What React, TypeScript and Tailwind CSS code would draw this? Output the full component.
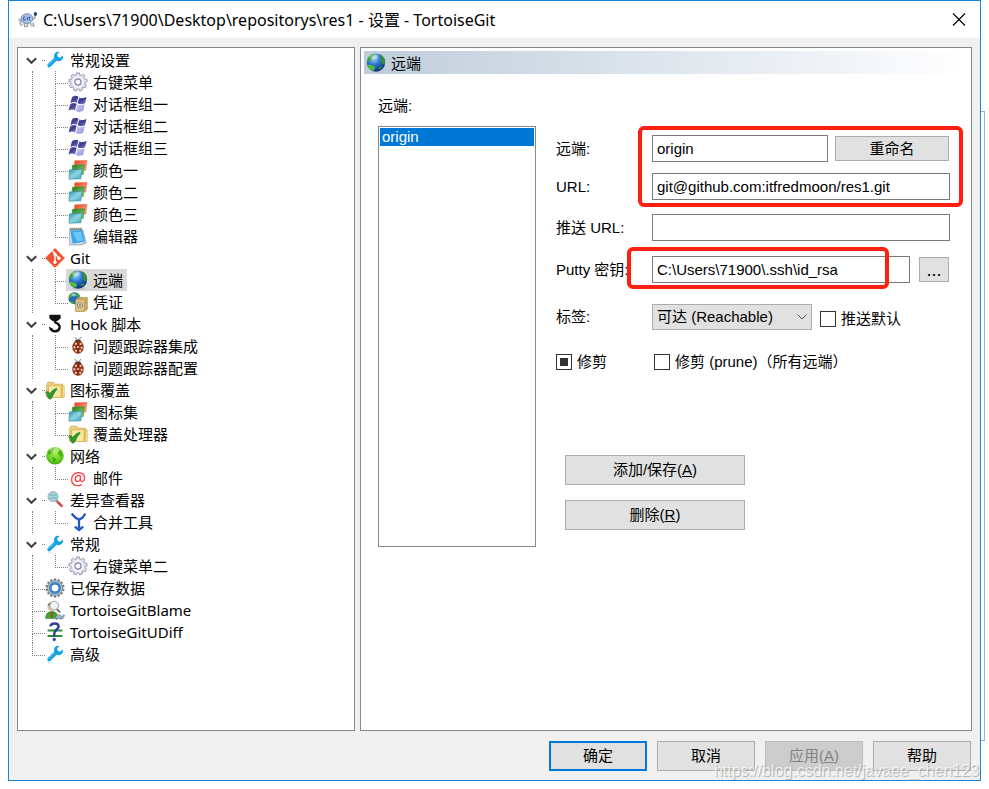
import { useEffect, useRef, useState } from "react"
import type { ReactNode } from "react"

const treeFont = "font-['Noto_Sans','Noto_Sans_CJK_SC',sans-serif]"
const formFont = "font-['Liberation_Sans','Noto_Sans_CJK_SC',sans-serif]"

// Outline of a cog with flat teeth, centred on 10,10
function cogPath(teeth: number, outer: number, inner: number) {
  const step = (Math.PI * 2) / teeth
  const points: string[] = []
  for (let i = 0; i < teeth; i++) {
    const corners = [
      [inner, -0.34],
      [outer, -0.22],
      [outer, 0.22],
      [inner, 0.34],
    ]
    for (const [r, offset] of corners) {
      const angle = (i + offset) * step
      points.push(`${(10 + r * Math.sin(angle)).toFixed(2)} ${(10 - r * Math.cos(angle)).toFixed(2)}`)
    }
  }
  return `M${points.join("L")}z`
}

const WrenchIcon = () => (
  <svg viewBox="0 0 20 20" className="w-5 h-5">
    <path d="M4.2 15.4 11.5 8.2" stroke="#12a2e8" strokeWidth="3.8" strokeLinecap="round" />
    <path d="M14.6 1.9a4.4 4.4 0 0 0-5.4 5.8l3.2 3.2a4.4 4.4 0 0 0 5.5-5.5l-2.9 2.3-2.3-.7-.6-2.4z" fill="#12a2e8" />
    <path d="M4 14.6 9.6 9" stroke="#5cc6f5" strokeWidth="1" strokeLinecap="round" />
    <path d="M3 18.8h4" stroke="#d6f0fb" strokeWidth="1.4" strokeLinecap="round" />
  </svg>
)

const GearIcon = () => (
  <svg viewBox="0 0 20 20" className="w-5 h-5">
    <path d={cogPath(9, 9.2, 7.2)} fill="#e0e0ec" stroke="#9292a6" strokeWidth="0.9" strokeLinejoin="round" />
    <circle cx="10" cy="10" r="5" fill="none" stroke="#f3f3f9" strokeWidth="1.8" />
    <circle cx="10" cy="10" r="3" fill="#fff" stroke="#9090a6" strokeWidth="1.3" />
  </svg>
)

const FlagIcon = () => (
  <svg viewBox="0 0 20 20" className="w-5 h-5">
    <defs>
      <linearGradient id="flag-dark" x1="0" y1="0" x2="0.7" y2="1">
        <stop offset="0" stopColor="#8f8fd0" />
        <stop offset="0.45" stopColor="#39398c" />
        <stop offset="1" stopColor="#7474c0" />
      </linearGradient>
      <linearGradient id="flag-light" x1="0" y1="0" x2="1" y2="1">
        <stop offset="0" stopColor="#c9c9f4" />
        <stop offset="1" stopColor="#9494d8" />
      </linearGradient>
    </defs>
    <path d="M4 3C6 1.4 8.2 1.4 10.4 2.6L8.9 9C6.7 7.8 4.6 7.8 2.4 9.2z" fill="url(#flag-dark)" />
    <path d="M11.2 3.2c2.6 1.3 4.9 1 7.4-.3L17 9.2c-2.6 1.3-4.8 1.4-7.3.1z" fill="url(#flag-dark)" />
    <path d="M2.1 10.2c2.2-1.4 4.3-1.4 6.5-.2L7 16.4c-2.2-1.2-4.4-1.1-6.4.3z" fill="url(#flag-dark)" />
    <path d="M9.5 10.4c2.5 1.3 4.8 1.2 7.3-.1l-1.6 6.5c-2.5 1.4-4.8 1.6-7.3.3z" fill="url(#flag-light)" />
  </svg>
)

const ColorsIcon = () => (
  <svg viewBox="0 0 20 20" className="w-5 h-5">
    <defs>
      <linearGradient id="red" x1="0" y1="0" x2="1" y2="1">
        <stop offset="0" stopColor="#ee3d18" />
        <stop offset="1" stopColor="#fbb8a0" />
      </linearGradient>
      <linearGradient id="green" x1="0" y1="0" x2="1" y2="1">
        <stop offset="0" stopColor="#23801a" />
        <stop offset="1" stopColor="#8fd070" />
      </linearGradient>
      <linearGradient id="cyan" x1="0" y1="0" x2="1" y2="1">
        <stop offset="0" stopColor="#2897b4" />
        <stop offset="0.5" stopColor="#8fd2e2" />
        <stop offset="1" stopColor="#38a3bd" />
      </linearGradient>
    </defs>
    <path d="M6.8.8 19 .4 17.8 10 6.2 10.2z" fill="url(#red)" stroke="#e05a3a" strokeWidth="0.5" />
    <path d="M4.4 5.2 16.4 4.7 15.4 14.4 4 14.6z" fill="url(#green)" stroke="#2f8a20" strokeWidth="0.5" />
    <path d="M1.4 9.9 14.2 9.1 12.8 18.8 1 19.2z" fill="url(#cyan)" stroke="#2b87a0" strokeWidth="0.6" />
  </svg>
)

const NotepadIcon = () => (
  <svg viewBox="0 0 20 20" className="w-5 h-5">
    <path d="M1.6 3.2h13L18.4 17 13 19H1.6z" fill="#c9d6e2" stroke="#8297ac" strokeWidth="0.6" />
    <path d="M2.4 4.6 14.4 4l2.6 11.8L4.6 17.6z" fill="#3da5e6" />
    <path d="M5 6.2 13 5.8 15 14.6 9 15.6z" fill="#6cc6f8" />
    <path d="M16.8 15.8 12.6 19l-.5-2.6z" fill="#edf4fa" stroke="#8297ac" strokeWidth="0.4" />
    <path d="M2.4 2.9h12" stroke="#5d5d54" strokeWidth="2.2" strokeDasharray="1 1" />
  </svg>
)

const GitIcon = () => (
  <svg viewBox="0 0 20 20" className="w-5 h-5">
    <path d="M10 .6 19.4 10 10 19.4.6 10z" fill="#f05133" stroke="#f05133" strokeWidth="1" strokeLinejoin="round" />
    <path d="M7.2 2.8 10 5.6V14M10 6l4 4" stroke="#fff" strokeWidth="1.4" fill="none" />
    <circle cx="10" cy="6.2" r="1.6" fill="#fff" />
    <circle cx="10" cy="14.2" r="1.7" fill="#fff" />
    <circle cx="14" cy="10.2" r="1.7" fill="#fff" />
  </svg>
)

const GlobeIcon = () => (
  <svg viewBox="0 0 20 20" className="w-5 h-5">
    <defs>
      <radialGradient id="globe" cx="0.38" cy="0.25" r="0.8">
        <stop offset="0" stopColor="#a9dcfb" />
        <stop offset="0.45" stopColor="#2d77d2" />
        <stop offset="1" stopColor="#0a2672" />
      </radialGradient>
    </defs>
    <ellipse cx="11" cy="18.4" rx="7" ry="1.4" fill="#c2c4c8" />
    <circle cx="10" cy="9.6" r="9.2" fill="url(#globe)" />
    <path d="M2.2 4.9C4.2 1.7 7 .8 8.8.8 8.2 2.6 6.4 3.8 5.4 5.8 4.4 7.6 3 8.6 1 9.2c0-1.6.4-3 1.2-4.3z" fill="#3ba82e" />
    <path d="M1.6 12.2c2.6-1 5 .4 7.6 2.2-.4 2-1.8 3.6-3.6 3-1.8-1-3.4-3.2-4-5.2z" fill="#4dbf34" />
    <path d="M13.6 1.2c2.2.8 3.8 2.4 4.8 4.6.9 2.4.7 4.4 0 6-1.8-.8-3.4-2.2-3.4-4.4-.2-2.2-.6-4.2-1.4-6.2z" fill="#34912c" />
    <path d="M13 14.2 16.6 13.6c-.8 1.4-2 2.4-3.4 3.2z" fill="#2f9b2d" />
    <ellipse cx="8" cy="3.8" rx="4" ry="2.2" fill="#fff" opacity="0.35" />
  </svg>
)

const CredentialIcon = () => (
  <svg viewBox="0 0 20 20" className="w-5 h-5">
    <circle cx="6.4" cy="6.2" r="6" fill="#2666bd" />
    <path d="M1 4C2.6 1 5 .2 6.8.2 6.6 2.4 4 5 .6 7zM1.4 9.4c2-1 4 0 5 2L4.6 12zM8.4.6c2.4.6 3.6 2.6 4 5l-3 .2z" fill="#3fae33" />
    <ellipse cx="6" cy="2.8" rx="2.6" ry="1.6" fill="#fff" opacity="0.5" />
    <path d="M7.6 7.6 11 5.4h8.4v12L16.6 19.4h-9z" fill="#c9a75c" stroke="#a08545" strokeWidth="0.5" />
    <path d="M8 8h8.2v11H8z" fill="#e2c98a" stroke="#b59a58" strokeWidth="0.5" />
    <circle cx="12" cy="13.2" r="2.7" fill="#d0ccbe" stroke="#8d8570" strokeWidth="0.9" />
    <circle cx="12" cy="13.2" r="0.9" fill="#7b7462" />
  </svg>
)

const HookIcon = () => (
  <svg viewBox="0 0 20 20" className="w-5 h-5">
    <path d="M4.4.8h11.2v3.6L12.4 7H7.6L4.4 4.4z" fill="#111" />
    <path d="M10 8.4c3.2 1.2 5 2.8 4.6 5.4-.5 2.6-2.6 3.6-5 3.4-1.8 0-3-.8-3.6-2.2" fill="none" stroke="#111" strokeWidth="2.4" />
    <path d="M4 12.4 8 15l-3.4 1z" fill="#111" />
    <circle cx="10" cy="7.8" r="1.3" fill="#111" />
  </svg>
)

const BugIcon = () => (
  <svg viewBox="0 0 20 20" className="w-5 h-5">
    <path d="M7 1.2 9 3.6M13 1.2 11 3.6" stroke="#555" strokeWidth="0.9" />
    <path d="M6.4 5.6C7 2.8 13 2.8 13.6 5.6z" fill="#2c2c34" />
    <ellipse cx="10" cy="11.2" rx="5.7" ry="6.6" fill="#96381a" />
    <path d="M10 5v12.6" stroke="#5d1c0a" strokeWidth="0.7" />
    <g fill="#f0cfc0">
      <circle cx="8" cy="7.8" r="1.1" />
      <circle cx="12.6" cy="8" r="1.1" />
      <circle cx="6.4" cy="11.4" r="1.1" />
      <circle cx="10" cy="11" r="1" />
      <circle cx="13.7" cy="11.8" r="1.1" />
      <circle cx="8" cy="14.8" r="1.1" />
      <circle cx="12.2" cy="14.8" r="1.1" />
    </g>
  </svg>
)

const FolderIcon = () => (
  <svg viewBox="0 0 20 20" className="w-5 h-5">
    <path d="M1.6 5.4 2.8 2.2h5.8l1.4 2h7.6v13H1.6z" fill="#ecd076" stroke="#bf9a42" strokeWidth="0.6" />
    <path d="M3.6 5.8h15.6v11.6H3.6z" fill="#fae9a6" stroke="#c9a23c" strokeWidth="0.6" />
    <path d="M15.4 6.2H18v11h-2.6z" fill="#e2bd58" />
    <path
      d="M.6 12.6C2 11.2 3.4 11.2 4.2 13l.4 1c1.4-2.4 4-4.8 7-5.8l.4 1.2c-2.2 2.2-3.8 5.4-5.4 8.8-1 1.2-2.4 1.2-3.2 0C2.8 16.2 1.8 14.2.6 12.6z"
      fill="#2f9a2b"
      stroke="#1f7a1f"
      strokeWidth="0.6"
    />
  </svg>
)

const NetworkIcon = () => (
  <svg viewBox="0 0 20 20" className="w-5 h-5">
    <defs>
      <radialGradient id="network" cx="0.5" cy="0.35" r="0.7">
        <stop offset="0" stopColor="#a6ee4c" />
        <stop offset="0.6" stopColor="#6cd21e" />
        <stop offset="1" stopColor="#389c12" />
      </radialGradient>
    </defs>
    <circle cx="10" cy="9.8" r="8.8" fill="url(#network)" />
    <path d="M2.8 5.8c1.8-2.4 3.8-3.4 6-3.8 1 1.2-.4 2.2-1 3.4-1 1.6-2.6 1.6-3 3.8-1.2-.4-1.8-1.4-2-3.4zM7.4 11.2c2-.2 3.6.8 4 2.2-.6 1.6-1.8 2.2-2.4 3.2-1.2-1.6-1.8-3.2-1.6-5.4zM12.6 4c2.2.2 3.8 1.6 4.6 3.6.2 1.8-.2 3.2-.8 4-1.2-1-1.4-2.2-3-3-.8-1.6.4-2.8-.8-4.6z" fill="#45a318" opacity="0.85" />
    <ellipse cx="9.6" cy="4.2" rx="5" ry="2.4" fill="#fff" opacity="0.3" />
  </svg>
)

const MailIcon = () => <span className="w-5 text-center text-lg/5 text-[#ff3b3b]">@</span>

const DiffViewerIcon = () => (
  <svg viewBox="0 0 20 20" className="w-5 h-5">
    <path d="M11.4 10.6 16.6 15.8" stroke="#d9473a" strokeWidth="2.6" strokeLinecap="round" />
    <path d="m11 10.2 1.8 1.8" stroke="#8b9195" strokeWidth="2" />
    <circle cx="8" cy="6.6" r="4.9" fill="#a5dbe0" stroke="#a3b3b9" strokeWidth="1.2" />
    <path d="M4.6 5h6.8M4.6 8h6.8" stroke="#6aa6ae" strokeWidth="1.2" />
  </svg>
)

const MergeIcon = () => (
  <svg viewBox="0 0 20 20" className="w-5 h-5" fill="none" stroke="#2458c0" strokeWidth="2.3">
    <path d="m3.6 1.6 4 4.2 3.4 1.8 3.4-1.8 3-4.2M11 7.4v9" />
    <path d="M6.8 14.6 11 18l4.2-3.4" />
  </svg>
)

const SavedDataIcon = () => (
  <svg viewBox="0 0 20 20" className="w-5 h-5">
    <path d={cogPath(14, 9.4, 7.4)} fill="#7d868f" stroke="#66707a" strokeWidth="0.4" />
    <circle cx="10" cy="10" r="7" fill="#c3cad1" />
    <circle cx="10" cy="10" r="4.7" fill="#fff" stroke="#1b62aa" strokeWidth="2.4" />
    <circle cx="10" cy="10" r="4.9" fill="none" stroke="#51aaf0" strokeWidth="0.8" />
  </svg>
)

const BlameIcon = () => (
  <svg viewBox="0 0 20 20" className="w-5 h-5">
    <path d="M.6 18.6c0-4.4 2-7 6.2-7s6.2 2.6 6.2 7z" fill="#36a92e" stroke="#1e7b1c" strokeWidth="0.5" />
    <path d="m5.8 12 1.4-.4.6.6L7.6 18H6z" fill="#c13b2b" />
    <circle cx="6.4" cy="7" r="3.8" fill="#e2c4a4" />
    <path d="M2.6 6.4C2.6 2.4 6 1.4 8 2.8z" fill="#8b7460" />
    <circle cx="9.2" cy="5.6" r="4.3" fill="#f3f6f8" stroke="#989ea2" strokeWidth="1" />
    <path d="m12 9 3 3.6" stroke="#555" strokeWidth="1.6" />
    <path d="M10.6 17.2c.4-3 5.6-3.4 6.4-.4l1.2-2 1.6.4-1.8 3.4h-7z" fill="#9bb3cc" stroke="#65727f" strokeWidth="0.5" />
    <path d="M11.6 18v1.4M16 18v1.4" stroke="#65727f" strokeWidth="1.2" />
  </svg>
)

const UDiffIcon = () => (
  <svg viewBox="0 0 20 20" className="w-5 h-5" fill="none">
    <path d="M2.6 8.4h14.8M2.6 14h14.8" stroke="#2f9030" strokeWidth="2" />
    <path d="M5.4 4.4C6 .8 13.4.4 13.6 4.4c0 3-4.4 3.4-4.4 7.6v2.4" stroke="#2e3d9e" strokeWidth="2.4" />
    <circle cx="9.2" cy="17.4" r="1.6" fill="#2e3d9e" />
  </svg>
)

const TortoiseIcon = () => (
  <svg viewBox="0 0 20 18" className="w-5 h-[18px]">
    <path d="M3.4 10.6 1.6 13l1.8 1.6 2-2M6.4 12v3.6h3.4V12M12 12l1.4 3h2.8L15 11.4" fill="#e4e4e4" stroke="#8a8a8a" strokeWidth="0.9" />
    <path d="M14 8.6 17 6.8V3.6" stroke="#a8a8a8" strokeWidth="1.6" fill="none" />
    <path d="M.8 8.2C2.4 6.8 4 9 3.4 10.6H1.2z" fill="#d7d7d7" stroke="#8f8f8f" strokeWidth="0.6" />
    <ellipse cx="9" cy="7.6" rx="5.8" ry="4.8" fill="#a9c3ea" stroke="#6c84ae" strokeWidth="0.9" />
    <path d="M7.4 6H5.6v3h2V7.8M9.4 6v3.2M11.2 5.4v3.8h1M10.6 6.8h1.8" stroke="#2f4d8c" strokeWidth="0.8" fill="none" />
    <ellipse cx="17.4" cy="3" rx="1.7" ry="2" fill="#1f4f78" />
  </svg>
)

interface TreeNode {
  label: string
  icon: () => ReactNode
  children?: TreeNode[]
}

const tree: TreeNode[] = [
  {
    label: "常规设置",
    icon: WrenchIcon,
    children: [
      { label: "右键菜单", icon: GearIcon },
      { label: "对话框组一", icon: FlagIcon },
      { label: "对话框组二", icon: FlagIcon },
      { label: "对话框组三", icon: FlagIcon },
      { label: "颜色一", icon: ColorsIcon },
      { label: "颜色二", icon: ColorsIcon },
      { label: "颜色三", icon: ColorsIcon },
      { label: "编辑器", icon: NotepadIcon },
    ],
  },
  {
    label: "Git",
    icon: GitIcon,
    children: [
      { label: "远端", icon: GlobeIcon },
      { label: "凭证", icon: CredentialIcon },
    ],
  },
  {
    label: "Hook 脚本",
    icon: HookIcon,
    children: [
      { label: "问题跟踪器集成", icon: BugIcon },
      { label: "问题跟踪器配置", icon: BugIcon },
    ],
  },
  {
    label: "图标覆盖",
    icon: FolderIcon,
    children: [
      { label: "图标集", icon: ColorsIcon },
      { label: "覆盖处理器", icon: FolderIcon },
    ],
  },
  { label: "网络", icon: NetworkIcon, children: [{ label: "邮件", icon: MailIcon }] },
  { label: "差异查看器", icon: DiffViewerIcon, children: [{ label: "合并工具", icon: MergeIcon }] },
  { label: "常规", icon: WrenchIcon, children: [{ label: "右键菜单二", icon: GearIcon }] },
  { label: "已保存数据", icon: SavedDataIcon },
  { label: "TortoiseGitBlame", icon: BlameIcon },
  { label: "TortoiseGitUDiff", icon: UDiffIcon },
  { label: "高级", icon: WrenchIcon },
]

// Dotted elbow that joins a row to its parent's line
function Branch({ last }: { last: boolean }) {
  return (
    <span className="flex flex-col w-[13px] h-full shrink-0">
      <span className="h-[13px] border-l border-b border-dotted border-[#808080]" />
      {!last && <span className="flex-1 border-l border-dotted border-[#808080]" />}
    </span>
  )
}

interface TreeLabelProps {
  node: TreeNode
  selected: boolean
  onSelect: () => void
}

function TreeLabel({ node, selected, onSelect }: TreeLabelProps) {
  const Icon = node.icon
  return (
    <button
      type="button"
      onClick={onSelect}
      className={`flex items-center h-full -ml-0.5 pl-0.5 pr-1 gap-[5px] whitespace-nowrap ${selected ? "bg-[#d9d9d9]" : ""}`}
    >
      <Icon />
      <span>{node.label}</span>
    </button>
  )
}

function SettingsTree() {
  const [selected, setSelected] = useState("远端")
  const [closed, setClosed] = useState<string[]>([])

  const toggle = (label: string) =>
    setClosed(closed.includes(label) ? closed.filter((l) => l !== label) : [...closed, label])

  return (
    <nav className="w-[338px] shrink-0 border border-[#828790] bg-white pt-px">
      <ul>
        {tree.map((node, i) => (
          <li key={node.label}>
            <div className="flex items-center h-[22px]">
              {node.children ? (
                <>
                  <button type="button" aria-label={node.label} onClick={() => toggle(node.label)} className="ml-2 mr-[5px]">
                    <svg viewBox="0 0 11 10" className="w-[11px] h-2.5" fill="none" stroke="#404040" strokeWidth="2">
                      <path d="M.8 3.2 5.5 7.8 10.2 3.2" />
                    </svg>
                  </button>
                  <span className="w-[3px] border-b border-dotted border-[#808080]" />
                </>
              ) : (
                <span className="h-full ml-3.5">
                  <Branch last={i === tree.length - 1} />
                </span>
              )}
              <TreeLabel node={node} selected={selected === node.label} onSelect={() => setSelected(node.label)} />
            </div>
            {node.children && !closed.includes(node.label) && (
              <ul className="ml-3.5 pl-[22px] border-l border-dotted border-[#808080]">
                {node.children.map((child, j) => (
                  <li key={child.label} className="flex items-center h-[22px]">
                    <Branch last={j === node.children!.length - 1} />
                    <TreeLabel node={child} selected={selected === child.label} onSelect={() => setSelected(child.label)} />
                  </li>
                ))}
              </ul>
            )}
          </li>
        ))}
      </ul>
    </nav>
  )
}

const inputClass = "flex-1 min-w-0 h-[27px] px-1 border border-[#7a7a7a] bg-white outline-none"
const buttonClass = "border border-[#adadad] bg-[#e1e1e1] hover:bg-[#e5f1fb]"
const checkClass =
  "appearance-none size-4 shrink-0 border border-[#333] bg-clip-content p-[3px] checked:bg-[#333] indeterminate:bg-[#333]"
const labelClass = "w-24 shrink-0 whitespace-nowrap"

function RemoteForm() {
  const prune = useRef<HTMLInputElement>(null)

  useEffect(() => {
    if (prune.current) prune.current.indeterminate = true
  }, [])

  return (
    <form className="flex-1 min-w-0 pt-[9px]" onSubmit={(e) => e.preventDefault()}>
      <div className="relative flex flex-col gap-[11px]">
        <div className="flex items-center">
          <label htmlFor="remote" className={labelClass}>远端:</label>
          <input id="remote" className={inputClass} defaultValue="origin" />
          <button type="button" className={`${buttonClass} w-[114px] h-[25px] ml-[7px] mr-px`}>重命名</button>
        </div>
        <div className="flex items-center">
          <label htmlFor="url" className={labelClass}>URL:</label>
          <input id="url" className={inputClass} defaultValue="git@github.com:itfredmoon/res1.git" />
        </div>
        <div className="absolute left-[82px] -right-[13px] -top-[9px] -bottom-[7px] border-4 border-[#ff1f10] rounded-md pointer-events-none" />
      </div>
      <div className="flex items-center mt-3.5">
        <label htmlFor="push-url" className={labelClass}>推送 URL:</label>
        <input id="push-url" className={inputClass} />
      </div>
      <div className="relative flex items-center mt-[15px]">
        <label htmlFor="putty" className={labelClass}>Putty 密钥:</label>
        <input id="putty" className={inputClass} defaultValue="C:\Users\71900\.ssh\id_rsa" />
        <button type="button" className={`${buttonClass} w-[30px] h-[25px] ml-[9px] mr-px text-lg/5`}>...</button>
        <div className="absolute left-[71px] right-[61px] -top-[9px] -bottom-1.5 border-4 border-[#ff1f10] rounded-md pointer-events-none" />
      </div>
      <div className="flex items-center mt-[21px]">
        <label htmlFor="tags" className={labelClass}>标签:</label>
        <div className="relative w-40">
          <select id="tags" className={`${buttonClass} appearance-none w-full h-[26px] px-1`}>
            <option>可达 (Reachable)</option>
            <option>全部</option>
            <option>无</option>
          </select>
          <svg viewBox="0 0 10 6" className="absolute right-[5px] top-2.5 w-2.5 h-1.5 pointer-events-none" fill="none" stroke="#555">
            <path d="m.5.5 4.5 4.5L9.5.5" />
          </svg>
        </div>
        <label className="flex items-center gap-[5px] ml-2 pt-1 whitespace-nowrap">
          <input type="checkbox" className={checkClass} />
          推送默认
        </label>
      </div>
      <div className="flex items-center mt-5 h-6">
        <label className="flex items-center gap-[5px] w-[98px] whitespace-nowrap">
          <input ref={prune} type="checkbox" className={checkClass} />
          修剪
        </label>
        <label className="flex items-center gap-[5px] whitespace-nowrap">
          <input type="checkbox" className={checkClass} />
          修剪 (prune)（所有远端）
        </label>
      </div>
      <div className="flex flex-col w-[180px] gap-[15px] mt-[81px] ml-[9px]">
        <button type="button" className={`${buttonClass} h-[30px]`}>添加/保存(<u>A</u>)</button>
        <button type="button" className={`${buttonClass} h-[30px]`}>删除(<u>R</u>)</button>
      </div>
    </form>
  )
}

function RemotePage() {
  return (
    <main className="flex-1 min-w-0 border border-[#828790] bg-white p-[3px]">
      <h2 className={`flex items-center h-[23px] gap-[5px] pl-0.5 bg-linear-to-r from-[#bfcddb] to-white ${treeFont}`}>
        <GlobeIcon />
        远端
      </h2>
      <div className="flex flex-col pl-3.5 pr-[18px] pt-5">
        <label htmlFor="remotes" className="leading-6">远端:</label>
        <div className="flex gap-5 mt-2">
          <select
            id="remotes"
            size={20}
            defaultValue="origin"
            className="appearance-none w-[158px] h-[421px] shrink-0 border border-[#828790] p-px overflow-hidden outline-none"
          >
            <option
              value="origin"
              className="h-[18px] min-h-0 px-0.5 py-0 leading-[18px] checked:bg-[linear-gradient(#0078d7,#0078d7)] checked:text-white text-white"
            >
              origin
            </option>
          </select>
          <RemoteForm />
        </div>
      </div>
    </main>
  )
}

export default function App() {
  return (
    <div className={`relative flex min-h-screen px-2 pb-2 bg-white text-[15px] leading-5 text-black ${formFont}`}>
      {/* edge of the window behind the dialog */}
      <div className="absolute right-1 top-[111px] bottom-12 w-3 border border-[#adadad] bg-white" />
      <div className="relative flex flex-col flex-1 min-w-0 border border-[#1883d7] bg-[#f0f0f0]">
        <header className={`flex items-center h-[37px] pl-[9px] pr-3.5 bg-white ${treeFont}`}>
          <TortoiseIcon />
          <h1 className="flex-1 ml-[5px] text-base/5">C:\Users\71900\Desktop\repositorys\res1 - 设置 - TortoiseGit</h1>
          <button type="button" aria-label="关闭">
            <svg viewBox="0 0 14 14" className="size-3.5" stroke="#000" strokeWidth="1.1">
              <path d="m1 .5 12 12M13 .5l-12 12" />
            </svg>
          </button>
        </header>
        <div className="flex flex-1 gap-[5px] px-2 pt-[9px]">
          <div className={`flex ${treeFont}`}>
            <SettingsTree />
          </div>
          <RemotePage />
        </div>
        <footer className="flex justify-end gap-2.5 pt-2.5 pb-[9px] pr-[9px]">
          <button type="button" className="w-[98px] h-[30px] border-2 border-[#0078d7] bg-[#e1e1e1]">确定</button>
          <button type="button" className={`${buttonClass} w-[98px] h-[30px]`}>取消</button>
          <button type="button" disabled className="w-[98px] h-[30px] border border-[#bfbfbf] bg-[#ccc] text-[#838383]">
            应用(<u>A</u>)
          </button>
          <button type="button" className={`${buttonClass} w-[98px] h-[30px]`}>帮助</button>
        </footer>
      </div>
      <p className="absolute right-2.5 bottom-1.5 text-base text-white/70 [text-shadow:1px_1px_1px_#aaa] pointer-events-none">
        https://blog.csdn.net/javaee_chen123
      </p>
    </div>
  )
}
